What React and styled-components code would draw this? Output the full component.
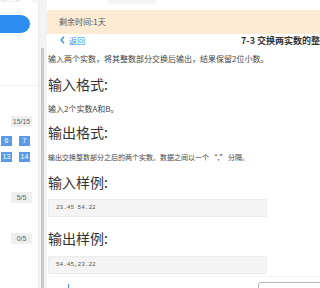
import React from 'react'
import styled, { createGlobalStyle } from 'styled-components'

const GlobalStyle = createGlobalStyle`
  html, body { margin: 0; padding: 0; background: #fff; }
  body { font-family: "Noto Sans CJK SC", "Noto Sans", sans-serif; }
`

const groups = [
  { score: '15/15', cells: [[6, 7], [13, 14]] },
  { score: '5/5', cells: [] },
  { score: '0/5', cells: [] },
]

function App() {
  return (
    <Page>
      <GlobalStyle />
      <Sidebar>
        <Caption><span>题目集 · 实验课程练习</span></Caption>
        <BlueButton />
        <Divider />
        {groups.map((g, i) => (
          <Group key={i} first={i === 0}>
            <Score>{g.score}</Score>
            {g.cells.map((row, r) => (
              <CellRow key={r}>
                {row.map(n => <Cell key={n}>{n}</Cell>)}
              </CellRow>
            ))}
          </Group>
        ))}
      </Sidebar>
      <Gutter>
        <Thumb />
      </Gutter>
      <Main>
        <TopBar>
          <SearchStub />
        </TopBar>
        <Banner>剩余时间:1天</Banner>
        <HeaderRow>
          <Back>
            <svg width="5" height="8" viewBox="0 0 5 8">
              <path d="M4 0.8 L1 4 L4 7.2" fill="none" stroke="#2d8cf0" strokeWidth="1.3" />
            </svg>
            返回
          </Back>
          <Title>7-3 交换两实数的整数部分</Title>
        </HeaderRow>
        <Content>
          <Para first>输入两个实数，将其整数部分交换后输出，结果保留2位小数。</Para>
          <Heading gap={12}>输入格式:</Heading>
          <Para>输入2个实数A和B。</Para>
          <Heading gap={10}>输出格式:</Heading>
          <Para small>输出交换整数部分之后的两个实数。数据之间以一个 “,” 分隔。</Para>
          <Heading gap={12}>输入样例:</Heading>
          <Code gap={9}>23.45 54.22</Code>
          <Heading gap={13}>输出样例:</Heading>
          <Code gap={10}>54.45,23.22</Code>
          <Rule />
          <Mark />
        </Content>
      </Main>
      <FloatBox />
    </Page>
  )
}

export default App

const Page = styled.div`
  position: relative;
  display: flex;
  width: 320px;
  height: 288px;
  overflow: hidden;
  background: #fff;
`

const Sidebar = styled.div`
  width: 38px;
  flex-shrink: 0;
  display: flex;
  flex-direction: column;
  background: #fff;
`

const Caption = styled.div`
  height: 2px;
  overflow: hidden;
  font-size: 7px;
  line-height: 7px;
  color: #dde1e8;
  white-space: nowrap;
  span { display: block; margin-top: -5px; }
`

const BlueButton = styled.div`
  margin-top: 13px;
  width: 30px;
  height: 18px;
  background: #2d8cf0;
  border-radius: 0 9px 9px 0;
`

const Divider = styled.div`
  margin-top: 52px;
  height: 1px;
  background: #f0f0f0;
`

const Group = styled.div`
  display: flex;
  flex-direction: column;
  margin-top: ${p => (p.first ? '26px' : '25px')};
  &:nth-of-type(n+4) { margin-top: 30px; }
`

const Score = styled.div`
  margin-left: 11px;
  width: 21px;
  height: 11px;
  background: #eeeeee;
  color: #666;
  font-family: "Liberation Sans", Arial, sans-serif;
  font-size: 7px;
  line-height: 11px;
  text-align: center;
`

const CellRow = styled.div`
  display: flex;
  gap: 7px;
  margin-left: 1px;
  margin-top: 9px;
  & + & { margin-top: 6px; }
`

const Cell = styled.div`
  width: 11px;
  height: 10px;
  background: #5b9be6;
  color: #fff;
  font-family: "Liberation Sans", Arial, sans-serif;
  font-size: 7px;
  line-height: 10px;
  text-align: center;
`

const Gutter = styled.div`
  width: 9px;
  flex-shrink: 0;
  background: #f3f3f3;
  padding: 48px 0 0 2px;
  box-sizing: border-box;
  border-left: 1px solid #ebebeb;
`

const Thumb = styled.div`
  width: 3px;
  height: 100%;
  background: #cacaca;
`

const Main = styled.div`
  flex: 1;
  min-width: 0;
  display: flex;
  flex-direction: column;
  background: #fff;
`

const TopBar = styled.div`
  height: 11px;
  display: flex;
  align-items: flex-start;
  padding-left: 61px;
`

const SearchStub = styled.div`
  width: 48px;
  height: 4px;
  background: #f4f4f4;
  border-radius: 0 0 3px 3px;
`

const Banner = styled.div`
  height: 24px;
  background: #fdebd3;
  color: #555;
  font-size: 8px;
  line-height: 24px;
  padding-left: 12px;
`

const HeaderRow = styled.div`
  height: 13px;
  display: flex;
  align-items: center;
  padding-left: 13px;
  white-space: nowrap;
  overflow: hidden;
`

const Back = styled.div`
  display: flex;
  align-items: center;
  gap: 4px;
  color: #2d8cf0;
  font-size: 8px;
  line-height: 11px;
  flex-shrink: 0;
`

const Title = styled.div`
  margin-left: 156px;
  flex-shrink: 0;
  color: #333;
  font-size: 9px;
  font-weight: bold;
  line-height: 11px;
`

const Content = styled.div`
  display: flex;
  flex-direction: column;
  padding-left: 1px;
  width: 219px;
`

const Para = styled.div`
  margin-top: ${p => (p.first ? '8px' : '12px')};
  color: #444;
  font-size: ${p => (p.small ? '7px' : '8px')};
  line-height: 10px;
  white-space: nowrap;
`

const Heading = styled.div`
  margin-top: ${p => p.gap}px;
  color: #333;
  font-size: 14px;
  line-height: 16px;
`

const Code = styled.div`
  margin-top: ${p => p.gap}px;
  height: 18px;
  box-sizing: border-box;
  padding-left: 7px;
  background: #f4f4f4;
  border: 1px solid #ececec;
  border-radius: 2px;
  color: #555;
  font-family: "Liberation Mono", "DejaVu Sans Mono", monospace;
  font-size: 6px;
  line-height: 16px;
`

const Rule = styled.div`
  margin-top: 2px;
  width: 272px;
  height: 1px;
  background: #f2f2f2;
`

const Mark = styled.div`
  margin: 7px 0 0 20px;
  width: 1px;
  height: 4px;
  background: #4f93e8;
`

const FloatBox = styled.div`
  position: absolute;
  left: 258px;
  top: 282px;
  width: 70px;
  height: 20px;
  background: #fff;
  border: 1px solid #b5b5b5;
  border-radius: 3px;
`
